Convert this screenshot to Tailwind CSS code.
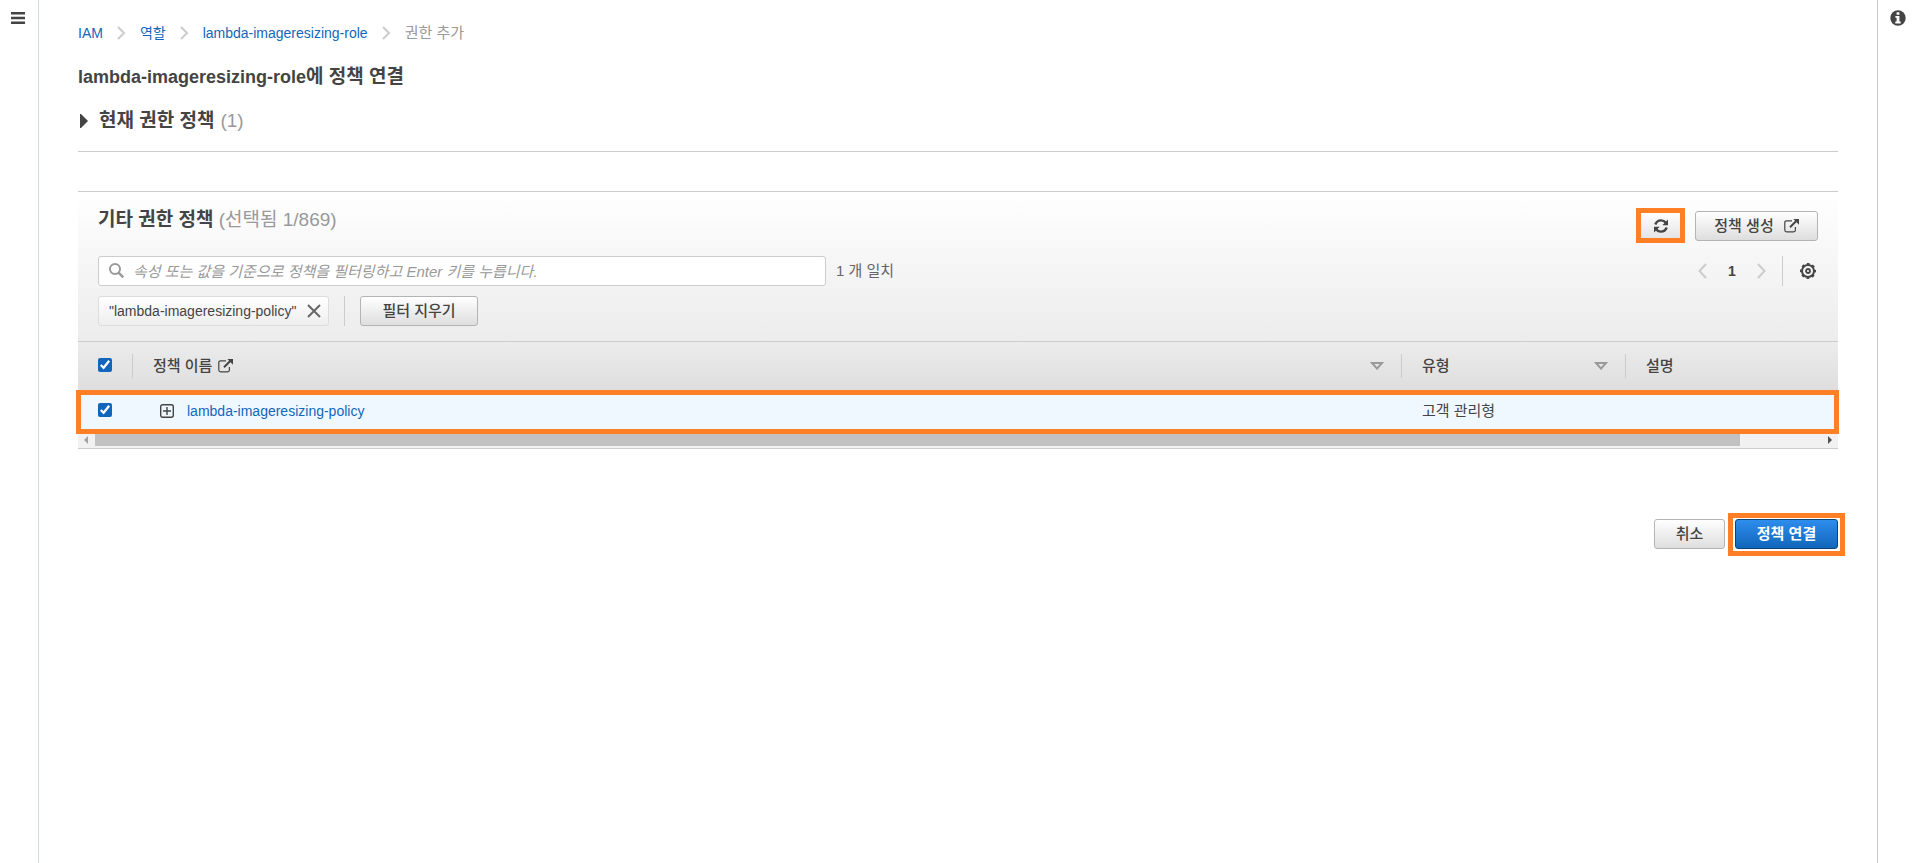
<!DOCTYPE html>
<html lang="ko">
<head>
    <meta charset="UTF-8">
    <meta name="viewport" content="width=device-width, initial-scale=1.0">
    <title>lambda-imageresizing-role에 정책 연결 - IAM</title>
    <script src="https://cdn.jsdelivr.net/npm/@tailwindcss/browser@4"></script>
</head>
<body class="flex min-h-screen bg-white font-['Liberation_Sans','Noto_Sans_CJK_KR',sans-serif] text-sm text-[#444]">
    <!-- 왼쪽 메뉴 -->
    <aside class="w-[39px] shrink-0 border-r border-[#d5dbdb] pt-3 pl-[11px]">
        <button type="button" aria-label="메뉴 열기" class="block">
            <svg class="block" width="14" height="12" viewBox="0 0 14 12" fill="#444"><path d="M0 0h14v2.5H0zM0 4.8h14v2.5H0zM0 9.5h14V12H0z"/></svg>
        </button>
    </aside>

    <main class="min-w-0 flex-1 px-[39px] pt-[23px]">
        <nav aria-label="이동 경로" class="flex h-5 items-center gap-[14px] leading-5">
            <a href="#" class="text-[#1166bb]">IAM</a>
            <svg width="9" height="14" viewBox="0 0 9 14" fill="none" stroke="#ccc" stroke-width="2"><path d="M1 1l6 6-6 6"/></svg>
            <a href="#" class="text-[#1166bb]">역할</a>
            <svg width="9" height="14" viewBox="0 0 9 14" fill="none" stroke="#ccc" stroke-width="2"><path d="M1 1l6 6-6 6"/></svg>
            <a href="#" class="text-[#1166bb]">lambda-imageresizing-role</a>
            <svg width="9" height="14" viewBox="0 0 9 14" fill="none" stroke="#ccc" stroke-width="2"><path d="M1 1l6 6-6 6"/></svg>
            <span class="text-[15px] text-[#999]">권한 추가</span>
        </nav>

        <h1 class="mt-[22px] text-lg leading-6 font-bold">lambda-imageresizing-role<span class="text-[19px]">에 정책 연결</span></h1>

        <button type="button" class="mt-5 flex items-center text-[19px] leading-6">
            <svg class="ml-[2px] mr-[11px]" width="8" height="14" viewBox="0 0 8 14" fill="#444"><path d="M0 0h1l7 7-7 7H0z"/></svg>
            <span class="font-bold">현재 권한 정책</span>
            <span class="ml-[6px] text-[#999]">(1)</span>
        </button>

        <hr class="mt-[18px] border-[#ccc]">

        <section class="mt-[39px] border-y border-[#ccc]">
            <div class="bg-linear-to-b from-white to-[#ececec] px-5 pb-[15px]">
                <div class="flex items-start justify-between pt-4">
                    <h2 class="text-[19px] leading-6 font-bold">기타 권한 정책 <span class="font-normal text-[#999]">(선택됨 1/869)</span></h2>
                    <div class="flex gap-[10px]">
                        <button type="button" aria-label="새로 고침" class="flex h-[35px] w-[49px] items-center justify-center border-5 border-[#ff7f27] bg-linear-to-b from-white to-[#e4e4e4]">
                            <svg width="16" height="16" viewBox="0 0 16 16" fill="none" stroke="#444" stroke-width="2.4"><path d="M2.3 6.5C3.4 3.8 5.5 2.4 8 2.4c1.9 0 3.6.8 4.7 2.2M13.7 9.5c-1.1 2.7-3.2 4.1-5.7 4.1-1.9 0-3.6-.8-4.7-2.2"/><path fill="#444" stroke="none" d="M15 1.5v5.7H9.3zM1 14.5V8.8h5.7z"/></svg>
                        </button>
                        <button type="button" class="mt-[3px] flex h-[30px] w-[123px] items-center justify-center gap-[10px] rounded-[3px] border border-[#b4b4b4] bg-linear-to-b from-white to-[#dedede] text-[15px] font-medium">
                            정책 생성
                            <svg width="15" height="14" viewBox="0 0 15 14" fill="none" stroke="#444" stroke-width="1.2"><path d="M8 1.8H2.6Q.8 1.8.8 3.4v7.7q0 1.8 1.8 1.8h7q1.8 0 1.8-1.8V8"/><path stroke-width="2" d="M6 8.3l6-6"/><path fill="#444" stroke="none" d="M9.3 0H15v5.7z"/></svg>
                        </button>
                    </div>
                </div>

                <div class="mt-[13px] flex items-center">
                    <label class="flex h-[30px] w-[728px] items-center gap-2 rounded-[3px] border border-[#ccc] bg-white pl-[10px]">
                        <svg width="16" height="16" viewBox="0 0 16 16" fill="none" stroke="#999" stroke-width="2"><circle cx="6" cy="6" r="5"/><path stroke-width="2.4" d="M9.6 9.6l4.7 4.7"/></svg>
                        <input type="text" aria-label="정책 필터" placeholder="속성 또는 값을 기준으로 정책을 필터링하고 Enter 키를 누릅니다." class="h-full flex-1 text-[15px] outline-none placeholder:text-[#999] placeholder:italic">
                    </label>
                    <span class="ml-[10px] text-[15px] leading-5 text-[#666]">1 개 일치</span>
                    <div class="ml-auto flex items-center">
                        <button type="button" aria-label="이전 페이지"><svg class="block" width="9" height="16" viewBox="0 0 9 16" fill="none" stroke="#ccc" stroke-width="2"><path d="M8 1L1.5 8 8 15"/></svg></button>
                        <span class="w-[50px] text-center font-bold">1</span>
                        <button type="button" aria-label="다음 페이지"><svg class="block" width="9" height="16" viewBox="0 0 9 16" fill="none" stroke="#ccc" stroke-width="2"><path d="M1 1l6.5 7L1 15"/></svg></button>
                        <span class="mr-[17px] ml-4 h-[30px] w-px bg-[#ccc]"></span>
                        <button type="button" aria-label="설정" class="mr-[2px]">
                            <svg class="block" width="16" height="16" viewBox="0 0 16 16" fill="none" stroke="#444"><circle cx="8" cy="8" r="6" stroke-width="2"/><circle cx="8" cy="8" r="7.2" stroke-width="1.6" stroke-dasharray="2.83 2.83" stroke-dashoffset="1.41"/><circle cx="8" cy="8" r="2" stroke-width="1.8"/></svg>
                        </button>
                    </div>
                </div>

                <div class="mt-[10px] flex items-center">
                    <div class="flex h-[30px] w-[231px] items-center justify-between rounded-[3px] border border-[#ddd] bg-linear-to-b from-white to-[#eee] pr-[7px] pl-[10px]">
                        "lambda-imageresizing-policy"
                        <button type="button" aria-label="필터 제거"><svg class="block" width="14" height="14" viewBox="0 0 14 14" stroke="#666" stroke-width="2"><path d="M1 1l12 12M13 1L1 13"/></svg></button>
                    </div>
                    <span class="mx-[15px] h-[30px] w-px bg-[#ccc]"></span>
                    <button type="button" class="h-[30px] w-[118px] rounded-[3px] border border-[#b4b4b4] bg-linear-to-b from-white to-[#dedede] text-[15px] font-medium">필터 지우기</button>
                </div>
            </div>

            <div class="relative">
                <table class="w-full table-fixed border-t border-[#ccc] text-left">
                    <colgroup><col class="w-[55px]"><col><col class="w-[224px]"><col class="w-[212px]"></colgroup>
                    <thead>
                        <tr class="h-12 bg-linear-to-b from-[#ececec] to-[#dedede]">
                            <th class="p-0">
                                <div class="flex h-6 items-center border-r border-[#ccc] pl-5"><input type="checkbox" checked aria-label="모두 선택" class="mb-[2px] size-[14px] accent-[#1166bb]"></div>
                            </th>
                            <th class="p-0 text-[15px] font-medium">
                                <div class="flex h-6 items-center border-r border-[#ccc] pr-[17px] pl-5">
                                    정책 이름
                                    <svg class="ml-[6px]" width="15" height="14" viewBox="0 0 15 14" fill="none" stroke="#444" stroke-width="1.2"><path d="M8 1.8H2.6Q.8 1.8.8 3.4v7.7q0 1.8 1.8 1.8h7q1.8 0 1.8-1.8V8"/><path stroke-width="2" d="M6 8.3l6-6"/><path fill="#444" stroke="none" d="M9.3 0H15v5.7z"/></svg>
                                    <svg class="ml-auto" width="14" height="8" viewBox="0 0 14 8" fill="none" stroke="#999" stroke-width="2"><path d="M2 1h10L7 6.6z"/></svg>
                                </div>
                            </th>
                            <th class="p-0 text-[15px] font-medium">
                                <div class="flex h-6 items-center justify-between border-r border-[#ccc] pr-[17px] pl-5">
                                    유형
                                    <svg width="14" height="8" viewBox="0 0 14 8" fill="none" stroke="#999" stroke-width="2"><path d="M2 1h10L7 6.6z"/></svg>
                                </div>
                            </th>
                            <th class="py-0 pr-0 pl-5 text-[15px] font-medium">설명</th>
                        </tr>
                    </thead>
                    <tbody>
                        <tr class="h-[42px] bg-[#f0f8ff]">
                            <td class="p-0 pl-5"><input type="checkbox" checked aria-label="lambda-imageresizing-policy 선택" class="mb-[2px] block size-[14px] accent-[#1166bb]"></td>
                            <td class="p-0 pl-[27px]">
                                <div class="flex items-center gap-[13px]">
                                    <button type="button" aria-label="펼치기"><svg class="block" width="14" height="14" viewBox="0 0 14 14" fill="none" stroke="#444" stroke-width="1.4"><rect x=".7" y=".7" width="12.6" height="12.6" rx="2"/><path d="M7 3v8M3 7h8"/></svg></button>
                                    <a href="#" class="text-[#1166bb]">lambda-imageresizing-policy</a>
                                </div>
                            </td>
                            <td class="p-0 pl-5 text-[15px]">고객 관리형</td>
                            <td></td>
                        </tr>
                    </tbody>
                </table>
                <!-- 가로 스크롤 막대 -->
                <div class="flex h-4 items-center bg-[#f1f1f1] pr-[6px] pl-[6px]">
                    <svg class="mt-px" width="4" height="8" viewBox="0 0 4 8" fill="#a3a3a3"><path d="M4 0v8L0 4z"/></svg>
                    <div class="mr-[88px] ml-[7px] mb-[2px] h-[14px] flex-1 bg-[#c1c1c1]"></div>
                    <svg class="mt-px" width="4" height="8" viewBox="0 0 4 8" fill="#505050"><path d="M0 0v8l4-4z"/></svg>
                </div>
                <div class="pointer-events-none absolute top-[49px] -right-px -left-[2px] h-11 border-5 border-[#ff7f27]"></div>
            </div>
        </section>

        <div class="mt-16 -mr-[7px] flex items-center justify-end gap-[3px]">
            <button type="button" class="h-[30px] w-[71px] rounded-[3px] border border-[#b4b4b4] bg-linear-to-b from-white to-[#dedede] text-[15px] font-medium">취소</button>
            <div class="border-5 border-[#ff7f27] px-[2px] pt-px pb-[2px]">
                <button type="button" class="block h-[30px] w-[103px] rounded-[3px] border border-[#0f4373] bg-linear-to-b from-[#2e8ded] to-[#1166bb] text-[15px] font-bold text-white">정책 연결</button>
            </div>
        </div>
    </main>

    <!-- 오른쪽 도움말 -->
    <aside class="w-[37px] shrink-0 border-l border-[#ccc] pt-[10px] pl-3">
        <button type="button" aria-label="도움말" class="block">
            <svg class="block" width="16" height="16" viewBox="0 0 16 16"><circle cx="8" cy="8" r="7.7" fill="#444"/><path fill="#fff" d="M6.6 2.2h2.8v2.5H6.6zM5.4 6h4v5.6h1.3v1.8H5.3v-1.8h1.3V7.8H5.4z"/></svg>
        </button>
    </aside>
</body>
</html>
